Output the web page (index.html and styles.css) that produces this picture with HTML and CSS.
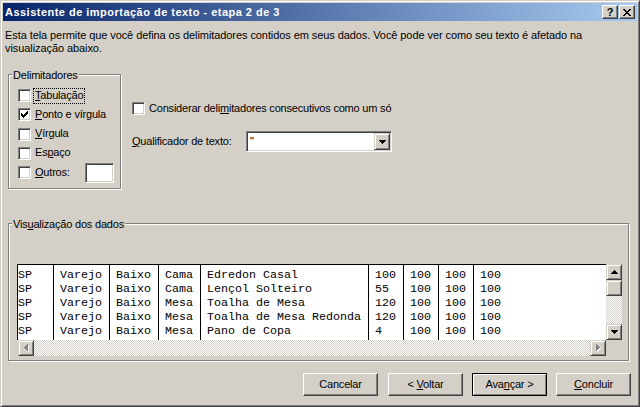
FILE: index.html
```html
<!DOCTYPE html>
<html lang="pt">
<head>
<meta charset="utf-8">
<title>Assistente de importação de texto - etapa 2 de 3</title>
<link rel="stylesheet" href="styles.css">
</head>
<body>
<div class="window">
  <div class="titlebar">
    <span class="title">Assistente de importação de texto - etapa 2 de 3</span>
    <div class="tbtns">
      <span class="tbtn help">?</span>
      <span class="tbtn close"><svg width="8" height="7" viewBox="0 0 8 7"><path fill="#000" d="M0 0h2v1H0zM6 0h2v1H6zM1 1h2v1H1zM5 1h2v1H5zM2 2h4v1H2zM3 3h2v1H3zM2 4h4v1H2zM1 5h2v1H1zM5 5h2v1H5zM0 6h2v1H0zM6 6h2v1H6z"/></svg></span>
    </div>
  </div>
  <p class="intro">Esta tela permite que você defina os delimitadores contidos em seus dados. Você pode ver como seu texto é afetado na<br>visualização abaixo.</p>
  <div class="middle">
    <div class="group delim">
      <span class="legend">Delimitadores</span>
      <div class="cb-row"><span class="cb"></span><span class="lbl focus"><u>T</u>abulação</span></div>
      <div class="cb-row"><span class="cb"><svg width="7" height="7" viewBox="0 0 7 7"><path fill="#000" d="M6 0h1v1H6zM5 1h2v1H5zM0 2h1v1H0zM4 2h3v1H4zM0 3h2v1H0zM3 3h3v1H3zM0 4h5v1H0zM1 5h3v1H1zM2 6h1v1H2z"/></svg></span><span class="lbl"><u>P</u>onto e vírgula</span></div>
      <div class="cb-row"><span class="cb"></span><span class="lbl"><u>V</u>írgula</span></div>
      <div class="cb-row"><span class="cb"></span><span class="lbl">Es<u>p</u>aço</span></div>
      <div class="cb-row"><span class="cb"></span><span class="lbl"><u>O</u>utros:</span><span class="txt"></span></div>
    </div>
    <div class="options">
      <div class="cb-row consider"><span class="cb"></span><span class="lbl">Considerar deli<u>m</u>itadores consecutivos como um só</span></div>
      <div class="qual">
        <span class="qual-label"><u>Q</u>ualificador de texto:</span>
        <div class="combo">
          <span class="combo-text">"</span>
          <span class="sbtn combo-btn"><svg width="7" height="4" viewBox="0 0 7 4"><path fill="#000" d="M0 0h7v1H0zM1 1h5v1H1zM2 2h3v1H2zM3 3h1v1H3z"/></svg></span>
        </div>
      </div>
    </div>
  </div>
  <div class="group preview">
    <span class="legend">Vis<u>u</u>alização dos dados</span>
    <div class="list">
      <div class="list-top">
        <div class="data">
          <div class="col c1">SP
SP
SP
SP
SP</div>
          <div class="col c2">Varejo
Varejo
Varejo
Varejo
Varejo</div>
          <div class="col c3">Baixo
Baixo
Baixo
Baixo
Baixo</div>
          <div class="col c4">Cama
Cama
Mesa
Mesa
Mesa</div>
          <div class="col c5">Edredon Casal
Lençol Solteiro
Toalha de Mesa
Toalha de Mesa Redonda
Pano de Copa</div>
          <div class="col c6">100
55
120
120
4</div>
          <div class="col c6">100
100
100
100
100</div>
          <div class="col c6">100
100
100
100
100</div>
          <div class="col c9">100
100
100
100
100</div>
        </div>
        <div class="vscroll">
          <span class="sbtn"><svg width="7" height="4" viewBox="0 0 7 4"><path fill="#000" d="M3 0h1v1H3zM2 1h3v1H2zM1 2h5v1H1zM0 3h7v1H0z"/></svg></span>
          <span class="sbtn thumb"></span>
          <span class="track"></span>
          <span class="sbtn"><svg width="7" height="4" viewBox="0 0 7 4"><path fill="#000" d="M0 0h7v1H0zM1 1h5v1H1zM2 2h3v1H2zM3 3h1v1H3z"/></svg></span>
        </div>
      </div>
      <div class="list-bottom">
        <div class="hscroll">
          <span class="sbtn"><svg width="5" height="8" viewBox="0 0 5 8"><path fill="#fff" d="M4 1h1v7H4zM3 2h1v5H3zM2 3h1v3H2zM1 4h1v1H1z"/><path fill="#808080" d="M3 0h1v7H3zM2 1h1v5H2zM1 2h1v3H1zM0 3h1v1H0z"/></svg></span>
          <span class="track"></span>
          <span class="sbtn"><svg width="5" height="8" viewBox="0 0 5 8"><path fill="#fff" d="M1 1h1v7H1zM2 2h1v5H2zM3 3h1v3H3zM4 4h1v1H4z"/><path fill="#808080" d="M0 0h1v7H0zM1 1h1v5H1zM2 2h1v3H2zM3 3h1v1H3z"/></svg></span>
        </div>
        <span class="corner"></span>
      </div>
    </div>
  </div>
  <div class="buttons">
    <span class="btn cancel">Cancelar</span>
    <span class="btn">&lt; <u>V</u>oltar</span>
    <span class="btn default">Ava<u>n</u>çar &gt;</span>
    <span class="btn"><u>C</u>oncluir</span>
  </div>
</div>
</body>
</html>
```
FILE: styles.css
```css
* { box-sizing: border-box; }
body { margin: 0; background: #d4d0c8; }

.window {
  width: 640px;
  height: 407px;
  background: #d4d0c8;
  border: 1px solid;
  border-color: #d4d0c8 #404040 #404040 #d4d0c8;
  box-shadow: inset 1px 1px #fff, inset -1px -1px #808080;
  padding: 2px;
  font: 11px/13px "Liberation Sans", Arial, sans-serif;
  letter-spacing: -0.2px;
  color: #000;
  display: flex;
  flex-direction: column;
}

u { text-underline-offset: 1px; }

.titlebar {
  height: 18px;
  flex: none;
  background: linear-gradient(to right, #0a246a, #a6caf0);
  display: flex;
  align-items: flex-start;
}
.title {
  flex: 1;
  color: #fff;
  font-weight: bold;
  line-height: 17px;
  padding: 1px 0 0 2px;
  letter-spacing: 0.48px;
}
.tbtns { display: flex; margin: 2px 2px 0 0; }
.tbtn {
  width: 16px;
  height: 14px;
  display: flex;
  align-items: center;
  justify-content: center;
  background: #d4d0c8;
  border: 1px solid;
  border-color: #fff #404040 #404040 #fff;
  box-shadow: inset -1px -1px #808080;
}
.tbtn.help { margin-right: 1px; font-weight: bold; font-size: 11px; line-height: 12px; letter-spacing: 0; }

.intro { margin: 8px 0 0 2px; letter-spacing: -0.08px; }

.middle { display: flex; margin-top: 19px; height: 115px; flex: none; }

.group {
  position: relative;
  border: 1px solid #808080;
  box-shadow: inset 1px 1px #fff, 1px 1px #fff;
  flex: none;
}
.legend {
  position: absolute;
  top: -6px;
  left: 3px;
  padding: 0 1px;
  background: #d4d0c8;
  white-space: nowrap;
}

.delim {
  margin-left: 5px;
  width: 113px;
  height: 115px;
  padding: 11px 6px 0 9px;
}
.cb-row { display: flex; align-items: center; height: 19.25px; }
.cb {
  position: relative;
  flex: none;
  width: 13px;
  height: 13px;
  background: #fff;
  border: 1px solid;
  border-color: #808080 #fff #fff #808080;
  box-shadow: inset 1px 1px #404040, inset -1px -1px #d4d0c8;
}
.cb svg { position: absolute; left: 2px; top: 2px; }
.lbl {
  margin-left: 2px;
  border: 1px dotted transparent;
  padding: 0 1px 1px;
  white-space: nowrap;
}
.lbl.focus { border-color: #000; }
.txt {
  margin-left: auto;
  width: 29px;
  height: 20px;
  flex: none;
  background: #fff;
  border: 1px solid;
  border-color: #808080 #fff #fff #808080;
  box-shadow: inset 1px 1px #404040, inset -1px -1px #d4d0c8;
}

.options { margin-left: 11px; padding-top: 28px; }
.cb-row.consider { height: 13px; }
.qual { display: flex; align-items: center; margin-top: 16px; }
.qual-label { width: 114px; flex: none; }
.combo {
  width: 146px;
  height: 21px;
  padding: 1px;
  display: flex;
  justify-content: space-between;
  background: #fff;
  border: 1px solid;
  border-color: #808080 #fff #fff #808080;
  box-shadow: inset 1px 1px #404040, inset -1px -1px #d4d0c8;
}
.combo-text { padding-left: 2px; line-height: 17px; }

.sbtn {
  display: flex;
  align-items: center;
  justify-content: center;
  flex: none;
  width: 16px;
  height: 16px;
  background: #d4d0c8;
  border: 1px solid;
  border-color: #d4d0c8 #404040 #404040 #d4d0c8;
  box-shadow: inset 1px 1px #fff, inset -1px -1px #808080;
}
.combo-btn { height: 17px; }

.preview {
  margin: 34px 0 0 5px;
  width: 621px;
  height: 138px;
  padding: 40px 0 0 8px;
}
.list { width: 605px; display: flex; flex-direction: column; }
.list-top { display: flex; height: 76px; }
.data {
  width: 589px;
  background: #fff;
  border-top: 1px solid #000;
  border-left: 1px solid #000;
  display: flex;
  overflow: hidden;
  font: 11.667px/14.2px "Liberation Mono", "Courier New", monospace;
  letter-spacing: 0;
  white-space: pre;
}
.col {
  flex: none;
  padding-top: 2.5px;
  border-left: 1px solid #000;
  padding-left: 6px;
}
.col.c1 { width: 35px; border-left: 0; padding-left: 0; }
.col.c2 { width: 56px; }
.col.c3 { width: 49px; }
.col.c4 { width: 42px; }
.col.c5 { width: 168px; }
.col.c6 { width: 35px; }
.col.c9 { flex: 1; }

.vscroll { width: 16px; display: flex; flex-direction: column; }
.track {
  flex: 1;
  background-image: conic-gradient(#fff 25%, #d4d0c8 0 50%, #fff 0 75%, #d4d0c8 0);
  background-size: 2px 2px;
}
.list-bottom { display: flex; height: 16px; }
.hscroll { display: flex; width: 588px; margin-left: 1px; }
.corner { width: 16px; }

.buttons {
  display: flex;
  justify-content: flex-end;
  gap: 9px;
  margin-top: 12px;
  padding-right: 6px;
}
.btn {
  width: 75px;
  height: 23px;
  text-align: center;
  line-height: 21px;
  border: 1px solid;
  border-color: #fff #404040 #404040 #fff;
  box-shadow: inset -1px -1px #808080;
}
.btn.cancel { margin-right: 1px; }
.btn.default {
  border-color: #000;
  box-shadow: inset 1px 1px #fff, inset -1px -1px #808080;
}
```
